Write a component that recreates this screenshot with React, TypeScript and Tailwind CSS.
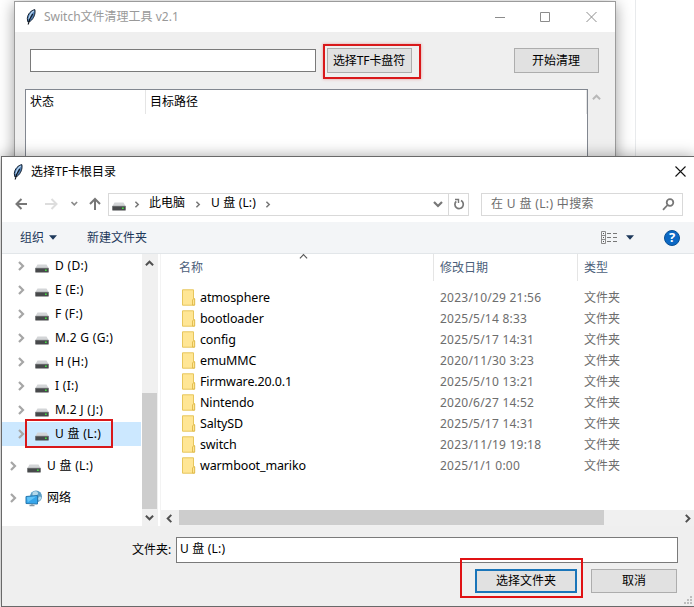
import React from 'react';

interface Folder {
  name: string;
  modified: string;
}

const folders: Folder[] = [
  { name: 'atmosphere', modified: '2023/10/29 21:56' },
  { name: 'bootloader', modified: '2025/5/14 8:33' },
  { name: 'config', modified: '2025/5/17 14:31' },
  { name: 'emuMMC', modified: '2020/11/30 3:23' },
  { name: 'Firmware.20.0.1', modified: '2025/5/10 13:21' },
  { name: 'Nintendo', modified: '2020/6/27 14:52' },
  { name: 'SaltySD', modified: '2025/5/17 14:31' },
  { name: 'switch', modified: '2023/11/19 19:18' },
  { name: 'warmboot_mariko', modified: '2025/1/1 0:00' },
];

const drives = ['D (D:)', 'E (E:)', 'F (F:)', 'M.2 G (G:)', 'H (H:)', 'I (I:)', 'M.2 J (J:)', 'U 盘 (L:)'];

const chevrons = {
  right: 'M2 1l4 4-4 4',
  left: 'M7 1L3 5l4 4',
  up: 'M1 7l4-4 4 4',
  down: 'M1 3l4 4 4-4',
};

const Chevron: React.FC<{ dir: keyof typeof chevrons; className: string; stroke?: number }> = ({ dir, className, stroke = 2.2 }) => (
  <svg viewBox="0 0 10 10" className={`shrink-0 ${className}`} fill="none" stroke="currentColor" strokeWidth={stroke}>
    <path d={chevrons[dir]} />
  </svg>
);

const Feather = () => (
  <svg viewBox="0 0 12 16" className="h-4 w-3 shrink-0">
    <path d="M9.8.6C6.300 1.300 2.600 4.800 2.300 9.500L2.800 12.800 5.600 12C8.700 9.500 10.800 4.500 9.800.6z" fill="#4f7fb5" stroke="#15202e" strokeWidth="1" />
    <path d="M8.800 2C6.500 3.500 4.600 6 4 10" stroke="#b9d5ee" strokeWidth="1.300" fill="none" />
    <path d="M7.800 5C5.500 8 3.800 11 3.200 15.500" stroke="#10151c" strokeWidth="1.200" fill="none" />
  </svg>
);

const DriveIcon = () => (
  <svg viewBox="0 0 14 9" className="h-[9px] w-3.5 shrink-0">
    <path d="M2.500.5h9L13.500 4H.5z" fill="#d3d5d7" />
    <rect x=".3" y="4" width="13.400" height="4.500" rx=".6" fill="#47494b" />
    <path d="M.5 4.200h13" stroke="#85888a" strokeWidth=".7" />
    <rect x="10" y="5.500" width="1.700" height="1.500" fill="#3fe03f" />
  </svg>
);

const NetworkIcon = () => (
  <svg viewBox="0 0 18 17" className="h-[17px] w-[18px] shrink-0">
    <circle cx="11" cy="6.500" r="6" fill="#5b9dc4" />
    <path d="M7.500 2.500c2-2 5-1.500 5.500.5s-2 2-2.500 3-3 1-3-1zM14 7c1.500-1 2.500 0 2 1.500S14 11.500 13.500 10 13 8 14 7z" fill="#b6d9ea" />
    <path d="M1 6.500l11.500-1v8.500L1 13.500z" fill="#35a5ea" stroke="#2878ae" strokeWidth="1" />
    <path d="M1.800 7.200l9.500-.8-8.500 5.800z" fill="#62c4f7" />
    <path d="M4.500 15.500h5M7 14v1.500" stroke="#8698a3" strokeWidth="1.300" />
  </svg>
);

const FolderIcon = () => (
  <svg viewBox="0 0 14 17" className="h-[17px] w-3.5 shrink-0">
    <path d="M.5.8h11v9h1v6.400H.5z" fill="#ffe695" stroke="#e7c65c" strokeWidth="1" />
    <path d="M10.500 16v-5l1-1.200h1.200v6.200z" fill="#ffe695" stroke="#dfb94a" strokeWidth=".9" />
  </svg>
);

const CleanerWindow = () => (
  <div className="absolute left-[14px] top-px flex h-[170px] w-[602px] flex-col border border-[#9b9b9b] bg-[#efefef] shadow-[0_3px_14px_rgba(0,0,0,0.38)]">
    <div className="flex h-[30px] shrink-0 items-center bg-white pl-2.5 text-[#999]">
      <Feather />
      <span className="ml-[7px]">Switch文件清理工具 v2.1</span>
      <svg viewBox="0 0 102 12" className="ml-auto mr-[18px] mb-px h-3 w-[102px]" fill="none" stroke="#8c8c8c">
        <path d="M0 6.500h10M45.500 1.500h9v9h-9zM91.500 1l10 10M101.500 1l-10 10" />
      </svg>
    </div>
    <div className="flex h-[57px] shrink-0 items-center pl-[15px] pr-4">
      <div className="h-[23px] w-[286px] border border-[#7a7a7a] bg-white" />
      <div className="ml-[7px] mt-0.5 border-2 border-[#d9181a] p-0.5 pr-[7px] pb-1 shadow-[0_0_3px_rgba(220,30,30,0.4)]">
        <button className="block h-[25px] w-[85px] whitespace-nowrap border border-[#adadad] bg-[#e1e1e1] pr-px tracking-[-0.1px]">选择TF卡盘符</button>
      </div>
      <button className="ml-auto h-[25px] w-[85px] border border-[#adadad] bg-[#e1e1e1] pr-px">开始清理</button>
    </div>
    <div className="flex flex-1 pl-2.5">
      <div className="flex w-[563px] items-start border border-[#828790] bg-white">
        <div className="h-6 w-[120px] border-r border-[#e5e5e5] pl-1 leading-6">状态</div>
        <div className="h-6 flex-1 border-r border-[#e5e5e5] pl-1 leading-6">目标路径</div>
      </div>
      <Chevron dir="up" className="ml-1 mt-1 h-[9px] w-[9px] text-[#b8b8b8]" />
    </div>
  </div>
);

const AddressBar = () => (
  <div className="flex h-[35px] items-center pl-[13px] pr-2.5 pb-px text-[#777]">
    <svg viewBox="0 0 88 14" className="h-3.5 w-[88px] shrink-0" fill="none" strokeWidth="2">
      <path d="M12 7H1.500M6.500 2l-5 5 5 5" stroke="#777" />
      <path d="M30 7h11.500M36.500 2l5 5-5 5" stroke="#ddd" />
      <path d="M56.500 5l2.800 2.800L62.100 5" stroke="#8a8a8a" strokeWidth="1.700" />
      <path d="M80 13V2M75 7l5-5 5 5" stroke="#777" />
    </svg>
    <div className="ml-[5px] flex h-[23px] w-[361px] items-center border border-[#d9d9d9] text-black">
      <div className="ml-[3px] mt-1"><DriveIcon /></div>
      <Chevron dir="right" className="ml-2 h-[7px] w-[7px] text-[#777]" />
      <span className="-mt-0.5 ml-2">此电脑</span>
      <Chevron dir="right" className="ml-2.5 h-[7px] w-[7px] text-[#777]" />
      <span className="-mt-0.5 ml-[9px] tracking-[0.15px]">U 盘 (L:)</span>
      <Chevron dir="right" className="ml-[9px] h-[7px] w-[7px] text-[#777]" />
      <Chevron dir="down" className="ml-auto mr-[5px] h-2.5 w-2.5 text-[#777]" />
      <div className="flex h-full w-5 items-center justify-center border-l border-[#d9d9d9]">
        <svg viewBox="0 0 12 12" className="h-3 w-3" fill="none" stroke="#777" strokeWidth="1.700">
          <path d="M8 2.600A4.200 4.200 0 1 1 3.200 3.300" />
          <path d="M2 1.500h3.500V5" strokeWidth="1.400" />
        </svg>
      </div>
    </div>
    <div className="ml-3 flex h-[23px] w-[202px] items-center border border-[#d9d9d9] pl-[9px] pr-[7px] text-[#6d6d6d]">
      <span className="tracking-[0.35px]">在 U 盘 (L:) 中搜索</span>
      <svg viewBox="0 0 13 13" className="ml-auto h-[13px] w-[13px]" fill="none" stroke="#777" strokeWidth="1.800">
        <circle cx="8" cy="4.500" r="3.300" />
        <path d="M5.600 7L1 11.800" />
      </svg>
    </div>
  </div>
);

const CommandBar = () => (
  <div className="flex h-8 items-center border-b border-[#e2e6e9] bg-[#f3f5f7] pl-[18px] pr-3.5 text-[#1e395b]">
    <span>组织</span>
    <svg viewBox="0 0 8 5" className="ml-[5px] h-[5px] w-2"><path d="M0 .3h8L4 4.700z" fill="#1e395b" /></svg>
    <span className="ml-[30px]">新建文件夹</span>
    <svg viewBox="0 0 17 13" className="ml-auto h-[13px] w-[17px]" fill="none" stroke="#8a8a8a">
      <path d="M.5.5h4v12h-4zM.5 4.500h4M.5 8.500h4" />
      <path d="M6 2.500h4M12 2.500h4M6 6.500h4M12 6.500h4M6 10.500h4M12 10.500h4" stroke="#777" />
      <path d="M2 2.500h1M2 6.500h1M2 10.500h1" stroke="#555" />
    </svg>
    <svg viewBox="0 0 8 5" className="ml-2 h-[5px] w-2"><path d="M0 .3h8L4 4.700z" fill="#1e395b" /></svg>
    <div className="ml-[30px] flex h-4 w-4 items-center justify-center rounded-full border border-[#084f94] bg-[#0b68c4] text-[13px] font-bold leading-none text-white">?</div>
  </div>
);

const NavTree = () => (
  <div className="flex w-[156px] shrink-0 bg-white">
    <div className="w-[140px]">
      {drives.map((label) => {
        const selected = label === 'U 盘 (L:)';
        return (
          <div key={label} className={`relative mr-px flex h-6 items-center pl-[15px] ${selected ? 'bg-[#cce8ff]' : ''}`}>
            <Chevron dir="right" className="h-2.5 w-2.5 text-[#a6a6a6]" />
            <div className="ml-2 mt-1"><DriveIcon /></div>
            <span className="ml-1.5 tracking-[0.3px]">{label}</span>
            {selected && <div className="absolute -top-[3px] left-[23px] h-[29px] w-[88px] border-2 border-[#d9181a]" />}
          </div>
        );
      })}
      <div className="mt-2 flex h-6 items-center pl-[7px]">
        <Chevron dir="right" className="h-2.5 w-2.5 text-[#a6a6a6]" />
        <div className="ml-2 mt-1"><DriveIcon /></div>
        <span className="ml-1.5 tracking-[0.3px]">U 盘 (L:)</span>
      </div>
      <div className="mt-2 flex h-6 items-center pl-[7px]">
        <Chevron dir="right" className="h-2.5 w-2.5 text-[#a6a6a6]" />
        <div className="ml-1.5"><NetworkIcon /></div>
        <span className="ml-1">网络</span>
      </div>
    </div>
    <div className="flex w-4 flex-col items-center bg-[#f0f0f0]">
      <Chevron dir="up" className="mr-0.5 mt-[5px] h-[9px] w-[9px] text-[#505050]" />
      <div className="mt-[125px] h-[116px] w-[15px] self-start bg-[#cdcdcd]" />
      <Chevron dir="down" className="mr-0.5 mt-1 h-[9px] w-[9px] text-[#505050]" />
    </div>
  </div>
);

const FileList = () => (
  <div className="ml-0.5 flex flex-1 flex-col border-l border-[#f3f3f3] bg-white">
    <div className="flex h-[27px] items-center text-[#4c607a]">
      <div className="relative flex h-full w-[273px] items-center border-r border-[#e5e5e5] pl-[18px] pt-px">
        名称
        <Chevron dir="up" stroke={1.3} className="absolute -top-0.5 left-[138px] h-[9px] w-[9px] text-[#555]" />
      </div>
      <div className="flex h-full w-36 items-center border-r border-[#e5e5e5] pl-1.5 pt-px">修改日期</div>
      <div className="pl-1.5 pt-px">类型</div>
    </div>
    <div className="mt-1.5 flex-1">
      {folders.map((folder) => (
        <div key={folder.name} className="flex h-[21px] items-center pl-[21px]">
          <FolderIcon />
          <span className="ml-1 w-60 text-[12.5px] tracking-[-0.13px]">{folder.name}</span>
          <span className="w-36 tracking-[0.23px] text-[#6d6d6d]">{folder.modified}</span>
          <span className="text-[#6d6d6d]">文件夹</span>
        </div>
      ))}
    </div>
    <div className="flex h-4 items-center bg-[#f0f0f0] pr-px">
      <Chevron dir="left" className="ml-1 mr-[5px] h-[9px] w-[9px] text-[#505050]" />
      <div className="h-[15px] w-[425px] self-start bg-[#cdcdcd]" />
      <Chevron dir="right" className="ml-auto h-[9px] w-[9px] text-[#505050]" />
    </div>
  </div>
);

const FolderDialog = () => (
  <div className="absolute left-px top-[156px] flex h-[451px] w-[694px] flex-col border border-[#696969] bg-white shadow-[0_0_14px_rgba(0,0,0,0.35)]">
    <div className="flex h-[30px] shrink-0 items-center pl-2.5 pr-2">
      <Feather />
      <span className="ml-[7px]">选择TF卡根目录</span>
      <svg viewBox="0 0 11 11" className="mb-0.5 ml-auto h-[11px] w-[11px]" stroke="#111" strokeWidth="1.100">
        <path d="M.5.5l10 10M10.500.5l-10 10" />
      </svg>
    </div>
    <AddressBar />
    <CommandBar />
    <div className="flex h-[272px] shrink-0">
      <NavTree />
      <FileList />
    </div>
    <div className="relative flex flex-1 flex-col bg-[#efefef] pl-[130px] pr-[17px] pt-[11px]">
      <div className="flex items-center">
        <span className="w-11 shrink-0">文件夹:</span>
        <div className="h-[26px] w-[502px] shrink-0 border border-[#7a7a7a] bg-white pl-[3px] leading-[22px] tracking-[0.2px]">U 盘 (L:)</div>
      </div>
      <div className="mt-1.5 flex justify-end gap-3.5">
        <button className="relative h-6 w-[102px] border-2 border-[#1a75b9] bg-[#e1e1e1]">
          选择文件夹
          <span className="absolute -left-[17px] -top-[13px] h-10 w-[123px] border-2 border-[#e01214]" />
        </button>
        <button className="h-6 w-[86px] border border-[#adadad] bg-[#e1e1e1]">取消</button>
      </div>
      <svg viewBox="0 0 8 8" className="absolute bottom-0.5 right-0.5 h-2 w-2" fill="#bdbdbd">
        <path d="M6 0h2v2H6zM3 3h2v2H3zM6 3h2v2H6zM0 6h2v2H0zM3 6h2v2H3zM6 6h2v2H6z" />
      </svg>
    </div>
  </div>
);

const App: React.FC = () => (
  <div className="relative h-[607px] w-[694px] overflow-hidden bg-white font-['Noto_Sans','Noto_Sans_CJK_SC',sans-serif] text-[12px] leading-4 text-black">
    <div className="ml-auto h-[156px] w-[59px] border-l border-[#e8eaec]" />
    <CleanerWindow />
    <FolderDialog />
  </div>
);

export default App;
